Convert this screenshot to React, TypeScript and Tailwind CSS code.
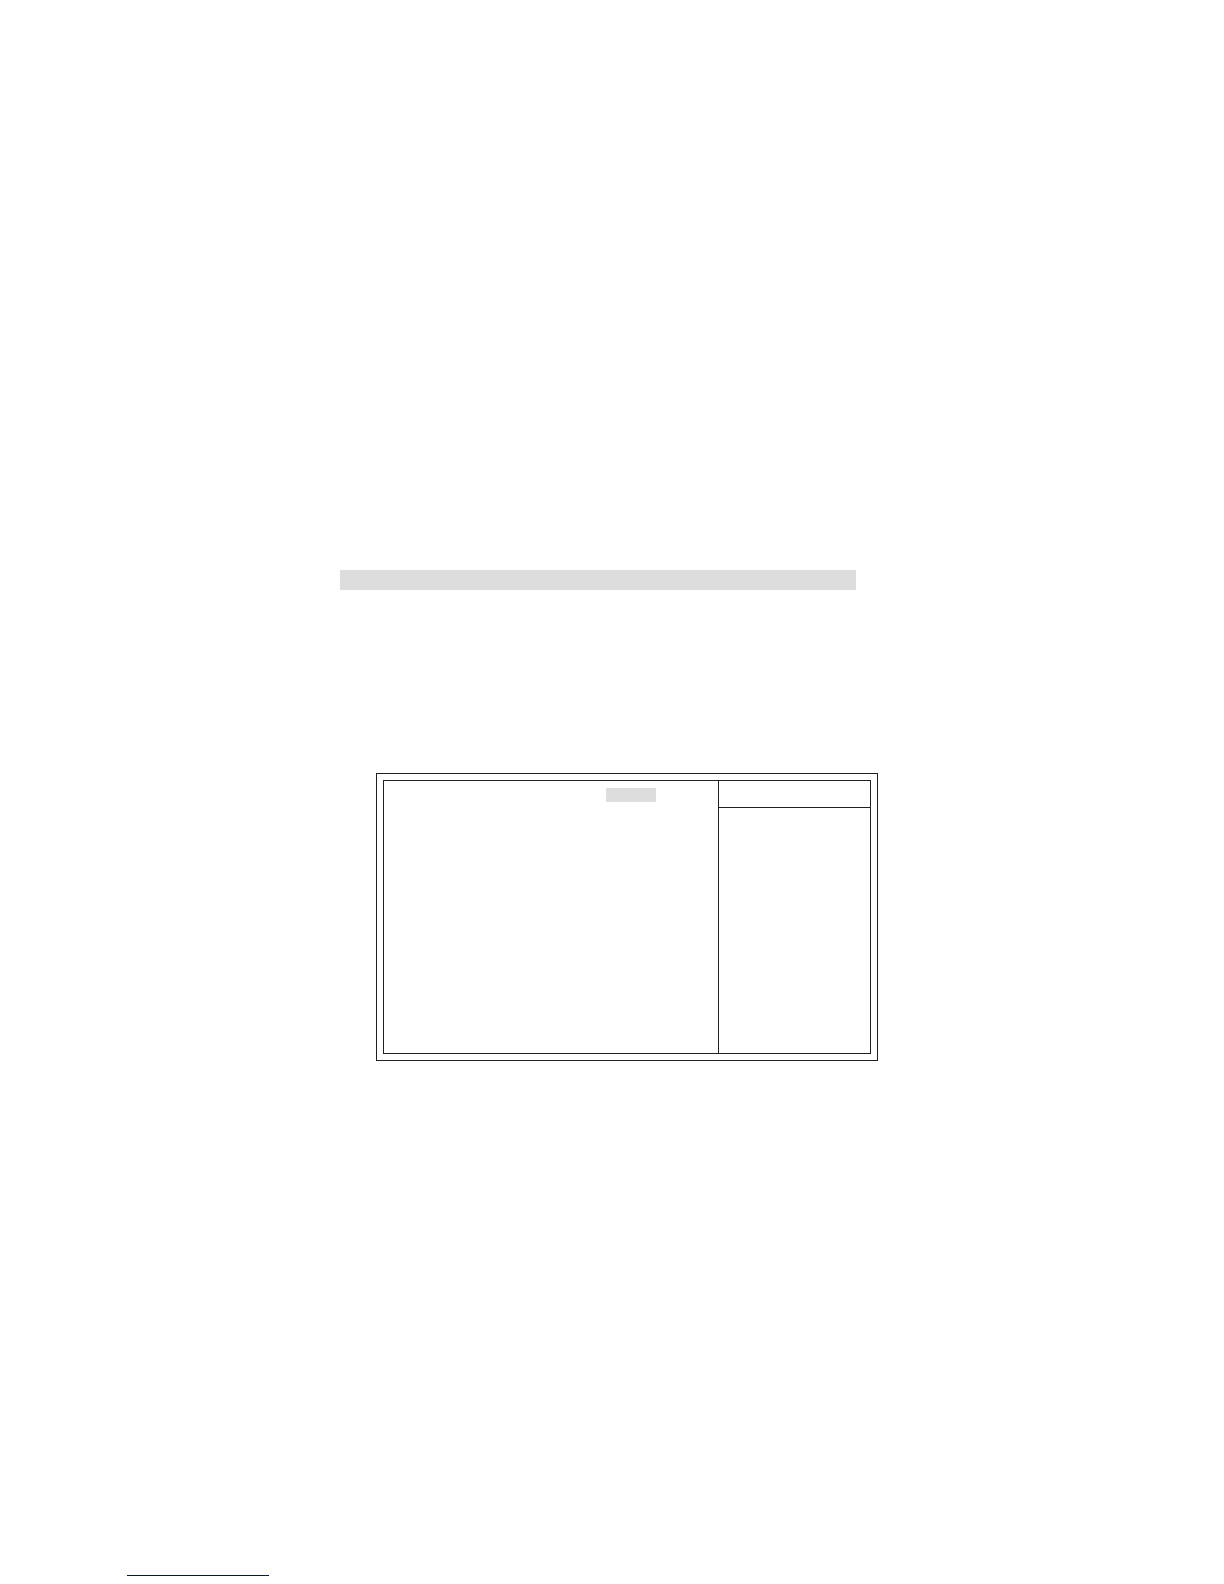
function Banner() {
  return <header className="ml-[340px] h-5 w-full max-w-[516px] bg-[#dddddd]" />;
}

function SetupScreen() {
  return (
    <section className="mt-[183px] ml-[376px] w-full max-w-[502px] border border-[#231f20] p-1.5">
      <div className="grid min-h-[274px] grid-cols-[334fr_152fr] border border-[#231f20]">
        <div className="flex justify-end pt-[7px] pr-[62px]">
          <div className="h-3.5 w-[50px] bg-[#dddddd]" />
        </div>
        <aside className="border-l border-[#231f20]">
          <div className="h-[27px] border-b border-[#231f20]" />
        </aside>
      </div>
    </section>
  );
}

export default function App() {
  return (
    <div className="flex min-h-screen flex-col overflow-hidden bg-white pt-[570px] pb-2">
      <Banner />
      <main>
        <SetupScreen />
      </main>
      <footer className="mt-auto pl-[127px]">
        <div className="h-px w-[142px] bg-[#0000b4]" />
      </footer>
    </div>
  );
}
